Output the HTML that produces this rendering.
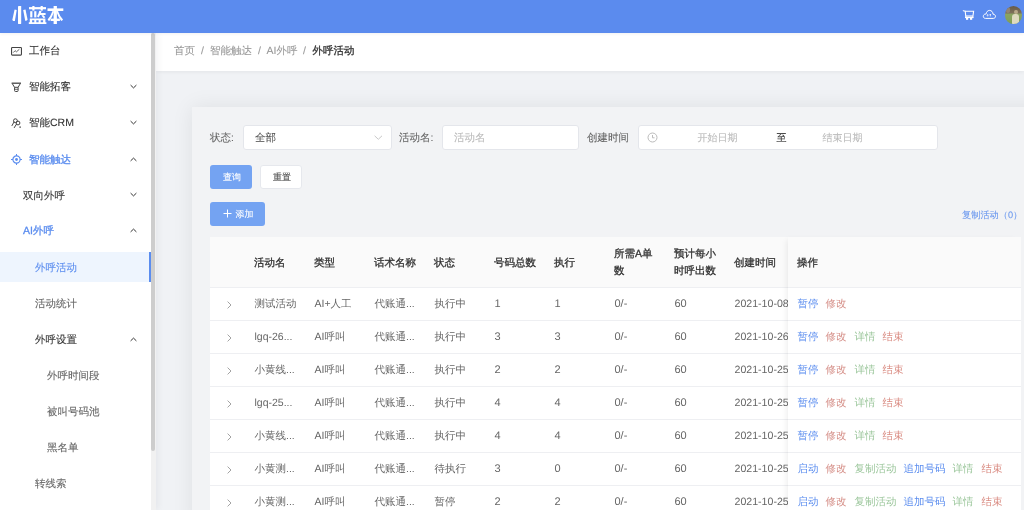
<!DOCTYPE html>
<html><head><meta charset="utf-8">
<style>
*{margin:0;padding:0;box-sizing:border-box}
html,body{width:1024px;height:510px;overflow:hidden;background:#f0f2f5;font-family:"Liberation Sans",sans-serif;color:#666;font-size:11px;text-rendering:geometricPrecision;-webkit-text-stroke-width:0.1px}
.abs{position:absolute;white-space:nowrap}
#hdr{position:absolute;left:0;top:0;width:1024px;height:33px;background:#5b8bee;z-index:5;box-shadow:0 1px 3px rgba(0,21,41,.06)}
#logo{position:absolute;left:11px;top:4px;color:#fff;font-size:19px;font-weight:bold;letter-spacing:0px}
#side{position:absolute;left:0;top:32px;width:151px;height:478px;background:#fff}
#sbar{position:absolute;left:151px;top:32px;width:5px;height:478px;background:#f1f1f1;z-index:3}
#sshadow{position:absolute;left:0;top:33px;width:156px;height:477px;box-shadow:2px 0 7px rgba(0,21,41,.05);z-index:2}
#sthumb{position:absolute;left:151px;top:33px;width:4px;height:418px;background:#cdcdcd;border-radius:3px;z-index:3}
.mi{position:absolute;left:0;width:151px;height:36px;line-height:36px;font-size:10.5px;color:#333;-webkit-text-stroke-width:0.1px}
.mi.act{-webkit-text-stroke-width:0.3px}
.mi .t{position:absolute;white-space:nowrap}
.chev{position:absolute;left:130px;width:8px;height:8px}
#bc{position:absolute;left:156px;top:32px;width:868px;height:39px;background:#fff;box-shadow:0 1px 4px rgba(0,0,0,.06)}
.bcx{top:13px;font-size:10.5px;color:#999}
#card{position:absolute;left:192px;top:107px;width:860px;height:420px;background:#f2f3f5;box-shadow:0 0 20px rgba(0,0,0,.08)}
.inp{position:absolute;background:#fff;border:1px solid #e4e6eb;border-radius:3px;height:25px;font-size:10.5px}
.flab{top:132px;color:#666;font-size:10.5px}
.btn{position:absolute;height:24px;border-radius:3px}
.bt{top:8px;font-size:9px;line-height:9px}
#tbl{position:absolute;left:210px;top:237px;width:811px;height:273px;background:#fff}
.th{position:absolute;top:0;height:50px;background:#fafafa}
.row{position:absolute;left:0;width:811px;height:33px;border-bottom:1px solid #eeeff2}
.c{position:absolute;white-space:nowrap;font-size:10.5px;color:#666;top:10px;margin-left:0.5px;-webkit-text-stroke-width:0}
.hc{position:absolute;white-space:nowrap;font-size:10.5px;color:#333;-webkit-text-stroke-width:0.3px}
#fix{position:absolute;left:788px;top:237px;width:233px;height:273px;background:#fff;box-shadow:-4px 0 6px -3px rgba(0,0,0,.08)}
</style></head>
<body>
<div id="wrap" style="position:absolute;left:0;top:0;width:1024px;height:510px;will-change:transform">
<div id="hdr">
  <svg style="position:absolute;left:0;top:0" width="70" height="32" viewBox="0 0 70 32" fill="#fff">
<!-- 小 -->
<rect x="18" y="6" width="3.2" height="18" rx="0.4"/>
<path d="M12.3 19.9 L14.6 9.6 L16.7 9.9 L14.9 20.9 Q13.6 21.6 12.3 19.9 Z"/>
<path d="M23.2 9.9 L25.5 9.6 L27.6 19.7 Q26.4 21.3 25.2 20.7 Z"/>
<!-- 蓝 -->
<rect x="29" y="7.1" width="17" height="2.2"/>
<rect x="32.3" y="6" width="2.2" height="4.6"/>
<rect x="40.6" y="6" width="2.2" height="4.6"/>
<rect x="30.2" y="11.2" width="2.2" height="6.2"/>
<rect x="34.2" y="11.2" width="2.2" height="6.2"/>
<path d="M39.3 10.8 L41.6 11.2 L40.9 13.1 L45.6 13.1 L45.6 15 L40 15 Q39.3 16.6 38.3 17.4 L37 16.3 Q38.6 14.2 39.3 10.8 Z"/>
<path d="M41.4 15.4 L43.2 15 L45.4 17.2 L43.6 18.2 Z"/>
<path d="M29.8 18.6 H45.4 V22.2 H46.4 V24 H28.8 V22.2 H29.8 Z M32.1 20.2 V22.2 H34.3 V20.2 Z M36.3 20.2 V22.2 H38.6 V20.2 Z M40.7 20.2 V22.2 H43.1 V20.2 Z" fill-rule="evenodd"/>
<!-- 本 -->
<rect x="47.5" y="8.4" width="15.8" height="2.6"/>
<rect x="53.6" y="6" width="3.3" height="18"/>
<path d="M52.6 10.8 L54.2 11.5 Q52.2 17.5 49.3 21 Q48.2 20.8 47.6 19.6 Q50.8 16 52.6 10.8 Z"/>
<path d="M57.9 10.8 L56.3 11.5 Q58.3 17.5 61.2 21 Q62.3 20.8 63 19.6 Q59.7 16 57.9 10.8 Z"/>
<rect x="50.6" y="18.6" width="9.3" height="2.4"/>
</svg>

  <svg style="position:absolute;left:960px;top:6px" width="40" height="18" viewBox="0 0 40 18">
<path d="M3.3 4.7 L5.2 5.2 L5.9 11.2" fill="none" stroke="#fff" stroke-width="1.1" stroke-linecap="round"/>
<path d="M5.2 5.3 H13.6 L12.8 11" fill="none" stroke="#fff" stroke-width="1.1"/>
<rect x="5.8" y="9" width="7" height="2.4" fill="#fff" opacity="0.55"/>
<rect x="5" y="10.8" width="8.6" height="1.3" fill="#fff"/>
<rect x="6" y="11.6" width="2.2" height="2.2" fill="#fff"/>
<rect x="10" y="11.6" width="2.2" height="2.2" fill="#fff"/>
<path d="M25.5 12.4 C24.2 12.4 23.3 11.5 23.3 10.3 C23.3 9.1 24.2 8.1 25.4 8.1 C25.6 8.1 25.8 8.1 26.0 8.2 C26.3 6.0 27.7 4.4 29.5 4.4 C31.5 4.4 33.0 6.0 33.0 8.2 C34.4 8.2 35.5 9.2 35.5 10.3 C35.5 11.5 34.6 12.4 33.4 12.4 Z" fill="none" stroke="#fff" stroke-width="1"/>
<path d="M27.7 10.4 V8.6 M27 9.3 L27.7 8.6 L28.4 9.3 M30.3 10.4 V8.2 M29.6 8.9 L30.3 8.2 L31 8.9" fill="none" stroke="#fff" stroke-width="0.8"/>
</svg>
  <div style="position:absolute;left:1004.5px;top:6px;width:17.8px;height:18px;border-radius:50%;overflow:hidden;background:linear-gradient(180deg,#675a47 0%,#7d705a 38%,#8aa463 46%,#7f9e56 100%)">
    <div style="position:absolute;left:1px;top:1px;width:4px;height:6px;background:#9c9280;border-radius:2px;opacity:.7"></div>
    <div style="position:absolute;left:7.5px;top:7.5px;width:6.5px;height:11px;background:#dedabf;border-radius:3px 3px 0 0"></div>
    <div style="position:absolute;left:9px;top:3.5px;width:4px;height:4.5px;background:#b9a88a;border-radius:50%"></div>
  </div>
</div>
<div id="side">
<div class="mi" style="top:1px"><svg class="ico" style="position:absolute;left:11px;top:14px" width="11" height="9" viewBox="0 0 11 9"><rect x="0.55" y="0.55" width="9.9" height="7.6" rx="0.8" fill="none" stroke="#444" stroke-width="1.1"/><path d="M2.2 5.6 L4.1 3.7 L5.5 4.8 L8.4 2.2" fill="none" stroke="#555" stroke-width="0.9"/></svg><span class="t" style="left:29px">工作台</span></div>
<div class="mi" style="top:37px"><svg style="position:absolute;left:11px;top:13px" width="11" height="11" viewBox="0 0 11 11"><path d="M0.6 1.2 H10" stroke="#444" stroke-width="1.3"/><path d="M1.4 1.8 L3.5 5.3 H7.1 L9.2 1.8" fill="none" stroke="#444" stroke-width="1"/><path d="M3.6 5.3 V8.6 Q3.6 9.5 4.5 9.5 H6.2 Q7.1 9.5 7.1 8.6 V5.3" fill="none" stroke="#444" stroke-width="1"/><path d="M3.6 7.3 H7.1" stroke="#444" stroke-width="0.8"/></svg><span class="t" style="left:29px">智能拓客</span><svg class="chev" style="top:14px" viewBox="0 0 8 8"><path d="M0.6 2.1 L3.5 4.9 L6.4 2.1" fill="none" stroke="#333" stroke-width="1"/></svg></div>
<div class="mi" style="top:73px"><svg style="position:absolute;left:11px;top:13px" width="12" height="11" viewBox="0 0 12 11"><circle cx="4.4" cy="2.7" r="1.9" fill="none" stroke="#444" stroke-width="1"/><circle cx="7.0" cy="5.0" r="1.9" fill="none" stroke="#444" stroke-width="1"/><path d="M2.9 4.2 L1 7.6 M5.4 6.3 L3.3 9.6" fill="none" stroke="#444" stroke-width="1" stroke-linecap="round"/><path d="M8.3 9.1 H10" stroke="#333" stroke-width="1"/></svg><span class="t" style="left:29px">智能CRM</span><svg class="chev" style="top:14px" viewBox="0 0 8 8"><path d="M0.6 2.1 L3.5 4.9 L6.4 2.1" fill="none" stroke="#333" stroke-width="1"/></svg></div>
<div class="mi act" style="top:110px;color:#5b8def"><svg style="position:absolute;left:11px;top:12px" width="11" height="11" viewBox="0 0 11 11"><circle cx="5.5" cy="5.5" r="3.6" fill="none" stroke="#5b8def" stroke-width="1.2"/><circle cx="5.5" cy="5.5" r="1.4" fill="#5b8def"/><path d="M5.5 0 V2 M5.5 9 V11 M0 5.5 H2 M9 5.5 H11" stroke="#5b8def" stroke-width="1"/></svg><span class="t" style="left:29px">智能触达</span><svg class="chev" style="top:14px" viewBox="0 0 8 8"><path d="M0.6 4.9 L3.5 2.1 L6.4 4.9" fill="none" stroke="#333" stroke-width="1"/></svg></div>
<div class="mi" style="top:146px"><span class="t" style="left:23px">双向外呼</span><svg class="chev" style="top:13px" viewBox="0 0 8 8"><path d="M0.6 2.1 L3.5 4.9 L6.4 2.1" fill="none" stroke="#333" stroke-width="1"/></svg></div>
<div class="mi act" style="top:181px;color:#5b8def"><span class="t" style="left:23px">AI外呼</span><svg class="chev" style="top:14px" viewBox="0 0 8 8"><path d="M0.6 4.9 L3.5 2.1 L6.4 4.9" fill="none" stroke="#333" stroke-width="1"/></svg></div>
<div style="position:absolute;left:0;top:220px;width:151px;height:30px;background:#eef5fe"></div><div style="position:absolute;left:148.7px;top:220px;width:2.3px;height:30px;background:#5b8def"></div>
<div class="mi n" style="top:218px;color:#5b8def"><span class="t" style="left:35px">外呼活动</span></div>
<div class="mi n" style="top:254px;color:#666"><span class="t" style="left:35px">活动统计</span></div>
<div class="mi" style="top:290px"><span class="t" style="left:35px">外呼设置</span><svg class="chev" style="top:14px" viewBox="0 0 8 8"><path d="M0.6 4.9 L3.5 2.1 L6.4 4.9" fill="none" stroke="#333" stroke-width="1"/></svg></div>
<div class="mi n" style="top:326px;color:#666"><span class="t" style="left:47px">外呼时间段</span></div>
<div class="mi n" style="top:362px;color:#666"><span class="t" style="left:47px">被叫号码池</span></div>
<div class="mi n" style="top:398px;color:#666"><span class="t" style="left:47px">黑名单</span></div>
<div class="mi n" style="top:434px;color:#666"><span class="t" style="left:35px">转线索</span></div>
</div>
<div id="sshadow"></div><div id="sbar"></div>
<div id="sthumb"></div>
<div id="bc">
  <span class="abs bcx" style="left:18px">首页</span>
  <span class="abs bcx" style="left:45px;font-family:'Liberation Sans',sans-serif">/</span>
  <span class="abs bcx" style="left:54px">智能触达</span>
  <span class="abs bcx" style="left:102px">/</span>
  <span class="abs bcx" style="left:110.5px">AI外呼</span>
  <span class="abs bcx" style="left:147px">/</span>
  <span class="abs bcx" style="left:156.5px;color:#333;-webkit-text-stroke-width:0.3px">外呼活动</span>
</div>
<div id="card"></div>
<div class="abs flab" style="left:210px">状态:</div>
<div class="inp" style="left:243px;top:125px;width:148.5px"><span class="abs" style="left:11px;top:6px;color:#555">全部</span><svg style="position:absolute;left:130px;top:9px" width="9" height="6" viewBox="0 0 9 6"><path d="M0.6 0.8 L4.3 4.3 L8 0.8" fill="none" stroke="#c8c8c8" stroke-width="1"/></svg></div>
<div class="abs flab" style="left:399px">活动名:</div>
<div class="inp" style="left:442px;top:125px;width:137px"><span class="abs" style="left:11px;top:6px;color:#bbb">活动名</span></div>
<div class="abs flab" style="left:587px">创建时间</div>
<div class="inp" style="left:638px;top:125px;width:300px"><svg style="position:absolute;left:8px;top:6px" width="11" height="11" viewBox="0 0 11 11"><circle cx="5.5" cy="5.5" r="4.5" fill="none" stroke="#bbb" stroke-width="1"/><path d="M5.5 3 V5.8 H7.5" fill="none" stroke="#bbb" stroke-width="1"/></svg><span class="abs" style="left:58.5px;top:5px;font-size:10px;color:#bbb">开始日期</span><span class="abs" style="left:137.5px;top:5px;font-size:10px;color:#333">至</span><span class="abs" style="left:183.5px;top:5px;font-size:10px;color:#bbb">结束日期</span></div>
<div class="btn" style="left:210px;top:164.5px;width:42px;background:#74a3f2"><span class="abs bt" style="left:13px;color:#fff">查询</span></div>
<div class="btn" style="left:260px;top:164.5px;width:42px;background:#fff;border:1px solid #e6e8ed"><span class="abs bt" style="left:12px;top:7px;color:#555">重置</span></div>
<div class="btn" style="left:210px;top:202px;width:55px;height:24px;background:#74a3f2"><svg style="position:absolute;left:13px;top:7px" width="9" height="9" viewBox="0 0 9 9"><path d="M4.5 0.5 V8.5 M0.5 4.5 H8.5" stroke="#fff" stroke-width="1"/></svg><span class="abs bt" style="left:25.5px;top:8px;color:#fff">添加</span></div>
<div class="abs" style="left:962px;top:209px;color:#6b98ee;font-size:9.2px">复制活动（0）</div>
<div id="tbl">
<div style="position:absolute;left:0;top:0;width:811px;height:51px;background:#fafafa;border-bottom:1px solid #eeeff2"></div>
<div class="hc" style="left:44px;top:20px">活动名</div>
<div class="hc" style="left:104px;top:20px">类型</div>
<div class="hc" style="left:164px;top:20px">话术名称</div>
<div class="hc" style="left:224px;top:20px">状态</div>
<div class="hc" style="left:284px;top:20px">号码总数</div>
<div class="hc" style="left:344px;top:20px">执行</div>
<div class="hc" style="left:524px;top:20px">创建时间</div>
<div class="hc" style="left:404px;top:11px">所需A单</div><div class="hc" style="left:404px;top:28px">数</div>
<div class="hc" style="left:464px;top:11px">预计每小</div><div class="hc" style="left:464px;top:28px">时呼出数</div>
<div class="row" style="top:51px">
<svg style="position:absolute;left:17px;top:12.5px" width="5" height="8" viewBox="0 0 5 8"><path d="M0.6 0.6 L4 4 L0.6 7.4" fill="none" stroke="#999" stroke-width="0.9"/></svg>
<div class="c" style="left:44px">测试活动</div>
<div class="c" style="left:104px">AI+人工</div>
<div class="c" style="left:164px">代账通...</div>
<div class="c" style="left:224px">执行中</div>
<div class="c" style="left:284px;font-size:11px">1</div>
<div class="c" style="left:344px;font-size:11px">1</div>
<div class="c" style="left:404px;font-size:11px">0/-</div>
<div class="c" style="left:464px;font-size:11px">60</div>
<div class="c" style="left:524px;font-size:10.6px">2021-10-08</div>
</div>
<div class="row" style="top:84px">
<svg style="position:absolute;left:17px;top:12.5px" width="5" height="8" viewBox="0 0 5 8"><path d="M0.6 0.6 L4 4 L0.6 7.4" fill="none" stroke="#999" stroke-width="0.9"/></svg>
<div class="c" style="left:44px">lgq-26...</div>
<div class="c" style="left:104px">AI呼叫</div>
<div class="c" style="left:164px">代账通...</div>
<div class="c" style="left:224px">执行中</div>
<div class="c" style="left:284px;font-size:11px">3</div>
<div class="c" style="left:344px;font-size:11px">3</div>
<div class="c" style="left:404px;font-size:11px">0/-</div>
<div class="c" style="left:464px;font-size:11px">60</div>
<div class="c" style="left:524px;font-size:10.6px">2021-10-26</div>
</div>
<div class="row" style="top:117px">
<svg style="position:absolute;left:17px;top:12.5px" width="5" height="8" viewBox="0 0 5 8"><path d="M0.6 0.6 L4 4 L0.6 7.4" fill="none" stroke="#999" stroke-width="0.9"/></svg>
<div class="c" style="left:44px">小黄线...</div>
<div class="c" style="left:104px">AI呼叫</div>
<div class="c" style="left:164px">代账通...</div>
<div class="c" style="left:224px">执行中</div>
<div class="c" style="left:284px;font-size:11px">2</div>
<div class="c" style="left:344px;font-size:11px">2</div>
<div class="c" style="left:404px;font-size:11px">0/-</div>
<div class="c" style="left:464px;font-size:11px">60</div>
<div class="c" style="left:524px;font-size:10.6px">2021-10-25</div>
</div>
<div class="row" style="top:150px">
<svg style="position:absolute;left:17px;top:12.5px" width="5" height="8" viewBox="0 0 5 8"><path d="M0.6 0.6 L4 4 L0.6 7.4" fill="none" stroke="#999" stroke-width="0.9"/></svg>
<div class="c" style="left:44px">lgq-25...</div>
<div class="c" style="left:104px">AI呼叫</div>
<div class="c" style="left:164px">代账通...</div>
<div class="c" style="left:224px">执行中</div>
<div class="c" style="left:284px;font-size:11px">4</div>
<div class="c" style="left:344px;font-size:11px">4</div>
<div class="c" style="left:404px;font-size:11px">0/-</div>
<div class="c" style="left:464px;font-size:11px">60</div>
<div class="c" style="left:524px;font-size:10.6px">2021-10-25</div>
</div>
<div class="row" style="top:183px">
<svg style="position:absolute;left:17px;top:12.5px" width="5" height="8" viewBox="0 0 5 8"><path d="M0.6 0.6 L4 4 L0.6 7.4" fill="none" stroke="#999" stroke-width="0.9"/></svg>
<div class="c" style="left:44px">小黄线...</div>
<div class="c" style="left:104px">AI呼叫</div>
<div class="c" style="left:164px">代账通...</div>
<div class="c" style="left:224px">执行中</div>
<div class="c" style="left:284px;font-size:11px">4</div>
<div class="c" style="left:344px;font-size:11px">4</div>
<div class="c" style="left:404px;font-size:11px">0/-</div>
<div class="c" style="left:464px;font-size:11px">60</div>
<div class="c" style="left:524px;font-size:10.6px">2021-10-25</div>
</div>
<div class="row" style="top:216px">
<svg style="position:absolute;left:17px;top:12.5px" width="5" height="8" viewBox="0 0 5 8"><path d="M0.6 0.6 L4 4 L0.6 7.4" fill="none" stroke="#999" stroke-width="0.9"/></svg>
<div class="c" style="left:44px">小黄测...</div>
<div class="c" style="left:104px">AI呼叫</div>
<div class="c" style="left:164px">代账通...</div>
<div class="c" style="left:224px">待执行</div>
<div class="c" style="left:284px;font-size:11px">3</div>
<div class="c" style="left:344px;font-size:11px">0</div>
<div class="c" style="left:404px;font-size:11px">0/-</div>
<div class="c" style="left:464px;font-size:11px">60</div>
<div class="c" style="left:524px;font-size:10.6px">2021-10-25</div>
</div>
<div class="row" style="top:249px">
<svg style="position:absolute;left:17px;top:12.5px" width="5" height="8" viewBox="0 0 5 8"><path d="M0.6 0.6 L4 4 L0.6 7.4" fill="none" stroke="#999" stroke-width="0.9"/></svg>
<div class="c" style="left:44px">小黄测...</div>
<div class="c" style="left:104px">AI呼叫</div>
<div class="c" style="left:164px">代账通...</div>
<div class="c" style="left:224px">暂停</div>
<div class="c" style="left:284px;font-size:11px">2</div>
<div class="c" style="left:344px;font-size:11px">2</div>
<div class="c" style="left:404px;font-size:11px">0/-</div>
<div class="c" style="left:464px;font-size:11px">60</div>
<div class="c" style="left:524px;font-size:10.6px">2021-10-25</div>
</div>
</div>
<div id="fix">
<div style="position:absolute;left:0;top:0;width:233px;height:51px;background:#fafafa;border-bottom:1px solid #eeeff2"></div>
<div class="hc" style="left:9px;top:20px">操作</div>
<div class="row" style="top:51px;width:233px">
<div class="c" style="left:9px;color:#5b8def">暂停</div>
<div class="c" style="left:37px;color:#d6918a">修改</div>
</div>
<div class="row" style="top:84px;width:233px">
<div class="c" style="left:9px;color:#5b8def">暂停</div>
<div class="c" style="left:37px;color:#d6918a">修改</div>
<div class="c" style="left:66px;color:#9bc69b">详情</div>
<div class="c" style="left:94px;color:#d98a80">结束</div>
</div>
<div class="row" style="top:117px;width:233px">
<div class="c" style="left:9px;color:#5b8def">暂停</div>
<div class="c" style="left:37px;color:#d6918a">修改</div>
<div class="c" style="left:66px;color:#9bc69b">详情</div>
<div class="c" style="left:94px;color:#d98a80">结束</div>
</div>
<div class="row" style="top:150px;width:233px">
<div class="c" style="left:9px;color:#5b8def">暂停</div>
<div class="c" style="left:37px;color:#d6918a">修改</div>
<div class="c" style="left:66px;color:#9bc69b">详情</div>
<div class="c" style="left:94px;color:#d98a80">结束</div>
</div>
<div class="row" style="top:183px;width:233px">
<div class="c" style="left:9px;color:#5b8def">暂停</div>
<div class="c" style="left:37px;color:#d6918a">修改</div>
<div class="c" style="left:66px;color:#9bc69b">详情</div>
<div class="c" style="left:94px;color:#d98a80">结束</div>
</div>
<div class="row" style="top:216px;width:233px">
<div class="c" style="left:9px;color:#5b8def">启动</div>
<div class="c" style="left:37px;color:#d6918a">修改</div>
<div class="c" style="left:66px;color:#9bc69b">复制活动</div>
<div class="c" style="left:115px;color:#5b8def">追加号码</div>
<div class="c" style="left:164px;color:#9bc69b">详情</div>
<div class="c" style="left:193px;color:#d98a80">结束</div>
</div>
<div class="row" style="top:249px;width:233px">
<div class="c" style="left:9px;color:#5b8def">启动</div>
<div class="c" style="left:37px;color:#d6918a">修改</div>
<div class="c" style="left:66px;color:#9bc69b">复制活动</div>
<div class="c" style="left:115px;color:#5b8def">追加号码</div>
<div class="c" style="left:164px;color:#9bc69b">详情</div>
<div class="c" style="left:193px;color:#d98a80">结束</div>
</div>
</div>
</div>
</body></html>
